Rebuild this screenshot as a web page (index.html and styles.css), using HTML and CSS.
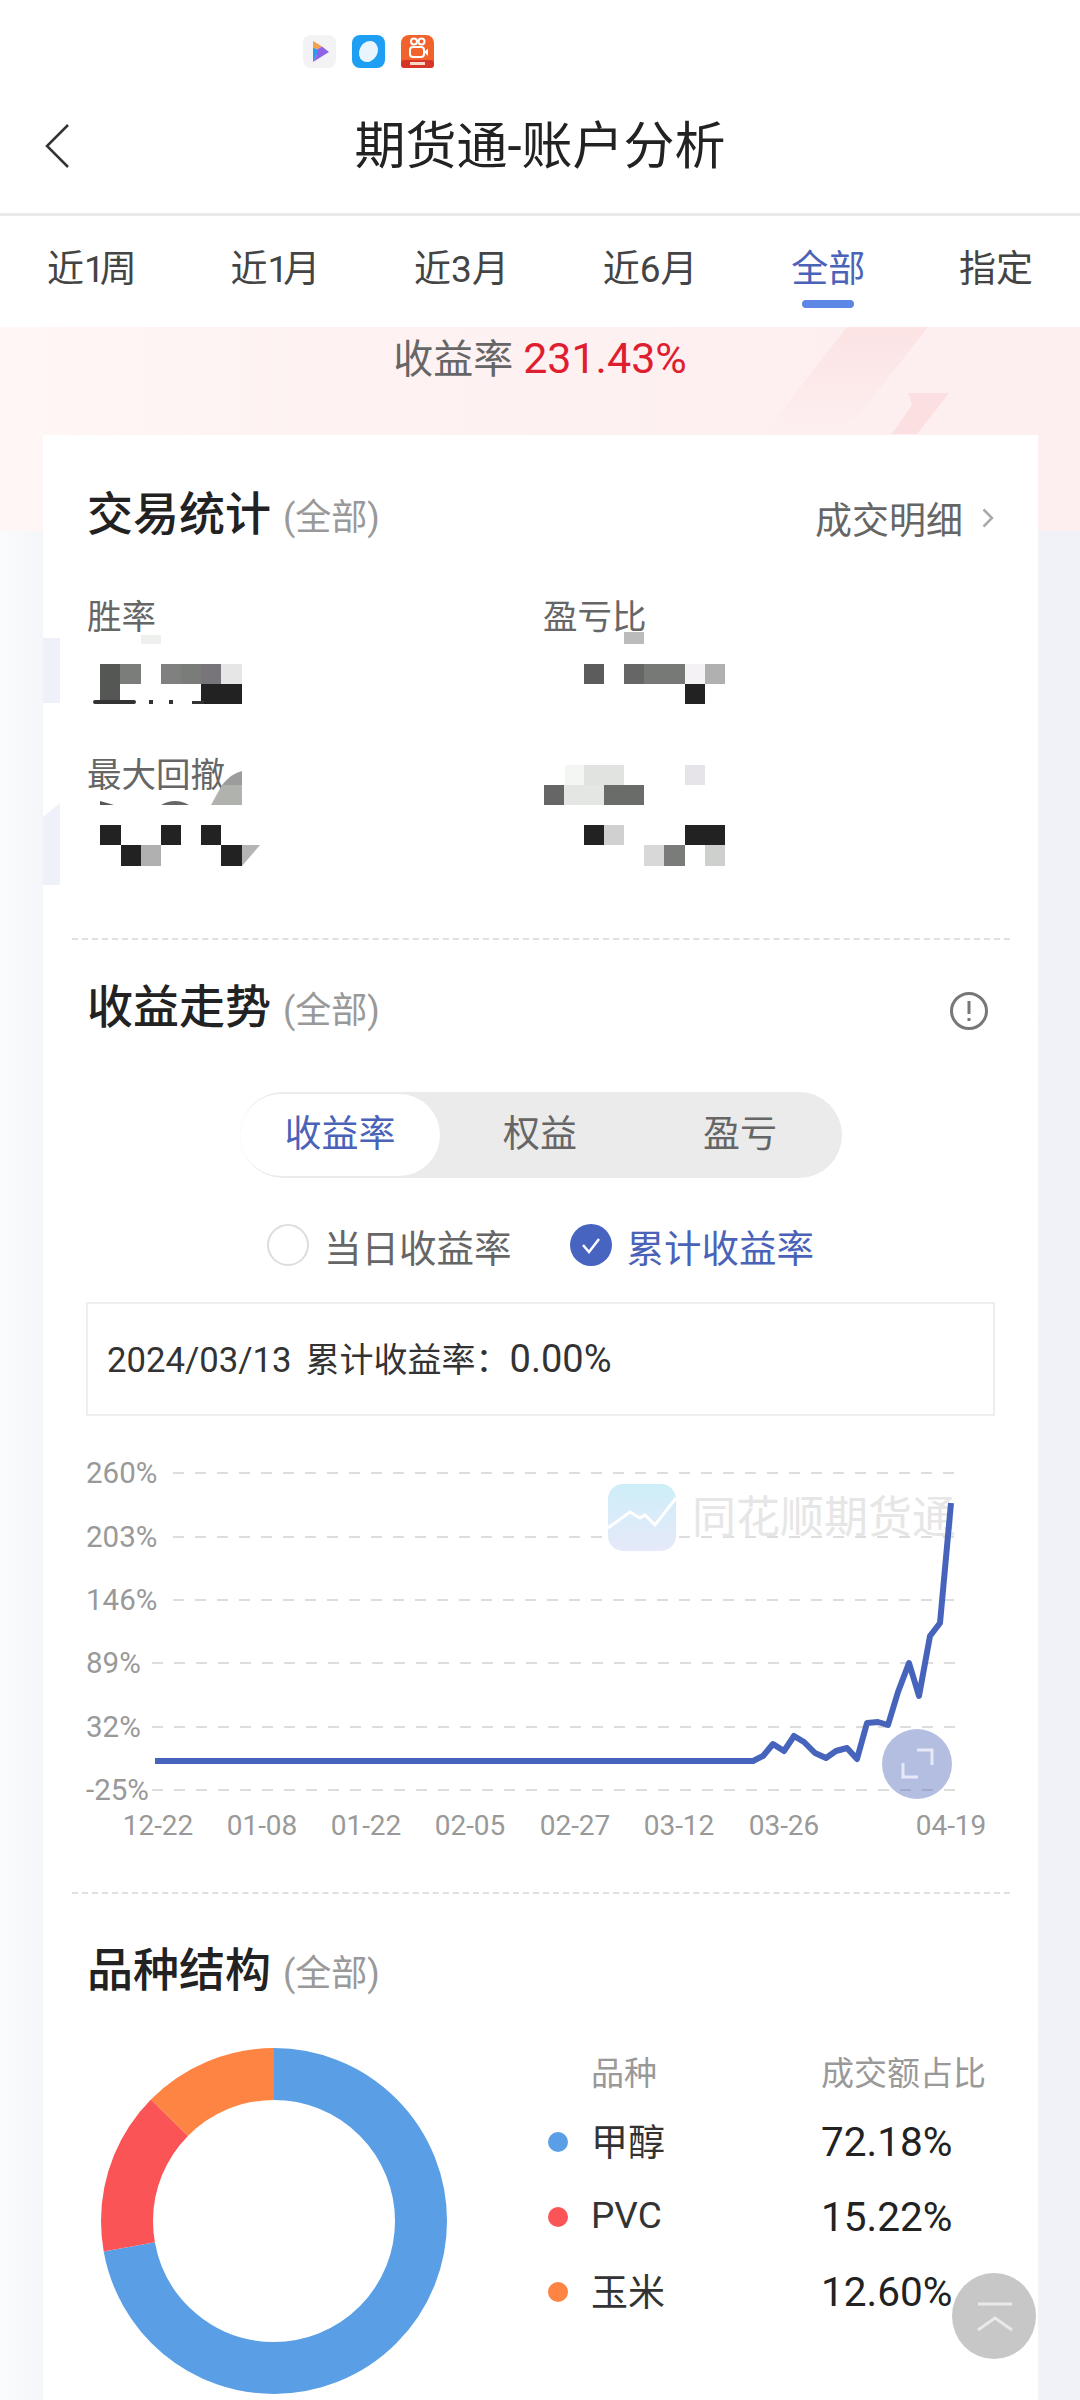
FILE: index.html
```html
<!DOCTYPE html>
<html lang="zh-CN">
<head>
<meta charset="utf-8">
<meta name="viewport" content="width=device-width,initial-scale=1.0">
<title>期货通-账户分析</title>
<link rel="stylesheet" href="styles.css">
</head>
<body>

<div class="statusbar">
    <svg class="app-icon" viewBox="0 0 33 33">
        <rect width="33" height="33" rx="8" fill="#f3f3f6"/>
        <path d="M10 6 L19 11.5 L14 14.5 L10 12.5Z" fill="#f5a14a"/>
        <path d="M10 12.5 L14 14.5 L14 20 L10 27Z" fill="#2f9bf0"/>
        <path d="M14 14.5 L19 11.5 L26 17 L10 27 L14 20Z" fill="#8f62e8"/>
    </svg>
    <svg class="app-icon" viewBox="0 0 33 33">
        <rect width="33" height="33" rx="8" fill="#1e9ff3"/>
        <ellipse cx="16.5" cy="16.5" rx="9" ry="11" transform="rotate(30 16.5 16.5)" fill="#e9f5fd"/>
    </svg>
    <svg class="app-icon" viewBox="0 0 33 33">
        <rect width="33" height="33" rx="8" fill="#f2622c"/>
        <rect y="25" width="33" height="8" rx="3" fill="#d8352a"/>
        <circle cx="13" cy="6.5" r="3" fill="none" stroke="#fff" stroke-width="2"/>
        <circle cx="20.5" cy="6.5" r="3" fill="none" stroke="#fff" stroke-width="2"/>
        <rect x="9" y="12" width="14" height="10" rx="3" fill="none" stroke="#fff" stroke-width="2"/>
        <path d="M23 17 L27 13.5 V21Z" fill="#fff"/>
        <rect x="9" y="27" width="15" height="3" fill="#f7d7c4"/>
    </svg>
</div>

<header class="navbar">
    <svg class="back" viewBox="0 0 26 46"><polyline points="24,2 3,23 24,44"/></svg>
    <h1>期货通-账户分析</h1>
</header>

<nav class="tabs">
    <span class="tab">近<b>1</b>周</span>
    <span class="tab">近<b>1</b>月</span>
    <span class="tab">近3月</span>
    <span class="tab">近6月</span>
    <span class="tab active">全部</span>
    <span class="tab">指定</span>
</nav>

<main class="content">
    <svg class="hero-bg" viewBox="0 0 1080 204">
        <defs>
            <linearGradient id="stripe" x1="0" y1="0" x2="0" y2="1">
                <stop offset="0" stop-color="#fce3e4"/>
                <stop offset="1" stop-color="#fdeff0"/>
            </linearGradient>
        </defs>
        <polygon points="847,0 928,0 844,107 764,107" fill="url(#stripe)"/>
        <polygon points="908,66 949,66 917,107 892,107 912,78" fill="#fcdfe1"/>
    </svg>

    <div class="total-rate">收益率 <em>231.43%</em></div>

    <div class="card">
        <i class="smear smear-a"></i>
        <i class="smear smear-b"></i>

        <div class="section-head">
            <h2>交易统计</h2><span class="range">(全部)</span>
            <a class="more">成交明细
                <svg viewBox="0 0 12 20"><polyline points="1.5,1.5 10,10 1.5,18.5"/></svg>
            </a>
        </div>

        <div class="stats">
            <div class="stat">
                <label>胜率</label>
                <svg viewBox="87 598 456 158">
                    <rect x="141" y="635" width="20" height="9" fill="#eef0ee"/>
                    <rect x="100" y="664" width="20" height="38" fill="#555755"/>
                    <rect x="120" y="664" width="21" height="20" fill="#7b7d7b"/>
                    <rect x="161" y="664" width="20" height="20" fill="#808080"/>
                    <rect x="181" y="664" width="20" height="20" fill="#7a7c7a"/>
                    <rect x="201" y="664" width="20" height="20" fill="#777579"/>
                    <rect x="221" y="664" width="21" height="20" fill="#e6e6e6"/>
                    <rect x="201" y="684" width="41" height="20" fill="#222"/>
                    <rect x="93" y="700" width="43" height="4" rx="2" fill="#333"/>
                    <rect x="149" y="700" width="4" height="4" fill="#333"/>
                    <rect x="169" y="700" width="4" height="4" fill="#333"/>
                    <rect x="192" y="701" width="12" height="3" fill="#333"/>
                </svg>
            </div>
            <div class="stat">
                <label>盈亏比</label>
                <svg viewBox="543 598 456 158">
                    <rect x="624" y="632" width="20" height="12" fill="#bbb"/>
                    <rect x="584" y="664" width="20" height="20" fill="#5c5c5c"/>
                    <rect x="624" y="664" width="20" height="20" fill="#666"/>
                    <rect x="644" y="664" width="41" height="20" fill="#777977"/>
                    <rect x="685" y="664" width="20" height="20" fill="#f5f2f5"/>
                    <rect x="705" y="664" width="20" height="20" fill="#b0b0b0"/>
                    <rect x="685" y="684" width="20" height="20" fill="#222"/>
                </svg>
            </div>
            <div class="stat">
                <label>最大回撤</label>
                <svg viewBox="87 756 456 158">
                    <path d="M211 805 L222 785 Q232 773 242 771 V785 H222Z" fill="#9c9c9c"/>
                    <path d="M211 805 L222 785 H242 V805Z" fill="#b0b2ae"/>
                    <path d="M100 801 L114 805 H100Z" fill="#555"/>
                    <path d="M161 805 Q175 797 189 805Z" fill="#666"/>
                    <rect x="100" y="825" width="21" height="20" fill="#222"/>
                    <rect x="161" y="825" width="20" height="20" fill="#222"/>
                    <rect x="201" y="825" width="20" height="20" fill="#222"/>
                    <rect x="121" y="845" width="20" height="21" fill="#222"/>
                    <rect x="141" y="845" width="20" height="21" fill="#b0b0b0"/>
                    <rect x="221" y="845" width="21" height="21" fill="#222"/>
                    <polygon points="242,845 260,845 242,866" fill="#b4b4b4"/>
                </svg>
            </div>
            <div class="stat">
                <label></label>
                <svg viewBox="543 756 456 158">
                    <rect x="565" y="765" width="19" height="20" fill="#f4f6f4"/>
                    <rect x="584" y="765" width="40" height="20" fill="#e0e3e0"/>
                    <rect x="685" y="765" width="20" height="20" fill="#e6e4e8"/>
                    <rect x="544" y="785" width="20" height="20" fill="#666"/>
                    <rect x="564" y="785" width="40" height="20" fill="#e4e6e4"/>
                    <rect x="604" y="785" width="40" height="20" fill="#6a6c6a"/>
                    <rect x="584" y="825" width="20" height="20" fill="#222"/>
                    <rect x="604" y="825" width="20" height="20" fill="#d0d0d0"/>
                    <rect x="685" y="825" width="40" height="20" fill="#222"/>
                    <rect x="644" y="845" width="20" height="21" fill="#d8d8d8"/>
                    <rect x="664" y="845" width="21" height="21" fill="#7a7c7a"/>
                    <rect x="705" y="845" width="20" height="21" fill="#cdd0cd"/>
                </svg>
            </div>
        </div>

        <div class="divider"></div>

        <div class="section-head trend-head">
            <h2>收益走势</h2><span class="range">(全部)</span>
            <svg class="info" viewBox="0 0 40 40">
                <circle cx="20" cy="20" r="17.5"/>
                <line x1="20" y1="10" x2="20" y2="23"/>
                <line x1="20" y1="27" x2="20" y2="30"/>
            </svg>
        </div>

        <div class="segment">
            <span class="seg active">收益率</span>
            <span class="seg">权益</span>
            <span class="seg">盈亏</span>
        </div>

        <div class="radios">
            <span class="radio"><i class="dot-off"></i>当日收益率</span>
            <span class="radio on">
                <svg class="dot-on" viewBox="0 0 42 42">
                    <circle cx="21" cy="21" r="21"/>
                    <polyline points="13,21 19,28 29,15"/>
                </svg>累计收益率</span>
        </div>

        <div class="tipbox"><span class="tip-date">2024/03/13</span><span class="tip-name">累计收益率：</span><span class="tip-val">0.00%</span></div>

        <svg class="chart" viewBox="43 1416 995 476">
            <g class="grid">
                <line x1="173" y1="1473" x2="957" y2="1473"/>
                <line x1="173" y1="1537" x2="957" y2="1537"/>
                <line x1="173" y1="1600" x2="957" y2="1600"/>
                <line x1="152" y1="1663" x2="957" y2="1663"/>
                <line x1="152" y1="1727" x2="957" y2="1727"/>
                <line x1="152" y1="1790" x2="957" y2="1790"/>
            </g>
            <g class="ylab">
                <text x="86" y="1483">260%</text>
                <text x="86" y="1547">203%</text>
                <text x="86" y="1610">146%</text>
                <text x="86" y="1673">89%</text>
                <text x="86" y="1737">32%</text>
                <text x="86" y="1800">-25%</text>
            </g>
            <g class="xlab">
                <text x="158" y="1835">12-22</text>
                <text x="262" y="1835">01-08</text>
                <text x="366" y="1835">01-22</text>
                <text x="470" y="1835">02-05</text>
                <text x="575" y="1835">02-27</text>
                <text x="679" y="1835">03-12</text>
                <text x="784" y="1835">03-26</text>
                <text x="951" y="1835">04-19</text>
            </g>
            <defs>
                <linearGradient id="wm" x1="0" y1="0" x2="0" y2="1">
                    <stop offset="0" stop-color="#cdeef8"/>
                    <stop offset="1" stop-color="#e6e9f9"/>
                </linearGradient>
            </defs>
            <rect x="608" y="1484" width="68" height="67" rx="15" fill="url(#wm)"/>
            <polyline class="wm-line" points="608,1528 630,1512 640,1518 645,1515 655,1525 676,1498"/>
            <text class="wm-text" x="692" y="1533">同花顺期货通</text>
            <polyline class="curve" points="155,1761 753,1761 763,1756 773,1744 784,1751 794,1736 804,1742 815,1753 826,1758 836,1751 847,1748 857,1759 867,1723 878,1722 888,1725 898,1692 909,1663 919,1696 930,1636 940,1623 951,1503"/>
            <circle class="zoom-bg" cx="917" cy="1764" r="35"/>
            <polyline class="zoom-ic" points="917,1750 932,1750 932,1765"/>
            <polyline class="zoom-ic" points="903,1763 903,1777 918,1777"/>
        </svg>

        <div class="divider"></div>

        <div class="section-head kind-head">
            <h2>品种结构</h2><span class="range">(全部)</span>
        </div>

        <div class="kinds">
            <svg class="donut" viewBox="0 0 346 346">
                <g transform="rotate(-90 173 173)">
                    <circle cx="173" cy="173" r="147" pathLength="100" stroke="#5a9fe6" stroke-dasharray="72.18 100"/>
                    <circle cx="173" cy="173" r="147" pathLength="100" stroke="#fb5456" stroke-dasharray="15.22 100" stroke-dashoffset="-72.18"/>
                    <circle cx="173" cy="173" r="147" pathLength="100" stroke="#fd8442" stroke-dasharray="12.6 100" stroke-dashoffset="-87.4"/>
                </g>
            </svg>
            <div class="legend">
                <span></span><span class="lg-head">品种</span><span class="lg-head">成交额占比</span>
                <i class="lg-dot blue"></i><span class="lg-name">甲醇</span><span class="lg-val">72.18%</span>
                <i class="lg-dot red"></i><span class="lg-name">PVC</span><span class="lg-val">15.22%</span>
                <i class="lg-dot orange"></i><span class="lg-name">玉米</span><span class="lg-val">12.60%</span>
            </div>
        </div>
    </div>
</main>

<div class="totop">
    <svg viewBox="0 0 84 86">
        <line x1="26" y1="31" x2="60" y2="31"/>
        <polyline points="26,57 43,45 60,57"/>
    </svg>
</div>

</body>
</html>
```

FILE: styles.css
```css
html, body {
    margin: 0;
    padding: 0;
}

body {
    position: relative;
    width: 1080px;
    height: 2400px;
    overflow: hidden;
    background: #fff;
    font-family: Roboto, "Noto Sans CJK SC", sans-serif;
    color: #333;
}

/* top */
.statusbar {
    display: flex;
    gap: 16px;
    height: 80px;
    padding: 35px 0 0 303px;
    box-sizing: border-box;
}

.app-icon {
    width: 33px;
    height: 33px;
}

.navbar {
    position: relative;
    display: flex;
    align-items: center;
    justify-content: center;
    height: 133px;
    border-bottom: 3px solid #e9e9e9;
}

.navbar h1 {
    margin: 0;
    font-size: 51px;
    font-weight: 400;
    line-height: 60px;
    color: #222;
}

.back {
    position: absolute;
    left: 44px;
    top: 43px;
    width: 26px;
    height: 46px;
    fill: none;
    stroke: #333;
    stroke-width: 2.5;
}

.tabs {
    display: flex;
    justify-content: space-between;
    align-items: flex-start;
    height: 111px;
    padding: 32px 47px 0;
    box-sizing: border-box;
    font-size: 37px;
    line-height: 44px;
    color: #444;
}

.tab b {
    font-weight: 400;
    letter-spacing: -5px;
}

.tab.active {
    color: #4a63b8;
}

.tab.active::after {
    content: "";
    display: block;
    width: 52px;
    height: 8px;
    margin: 8px auto 0;
    border-radius: 4px;
    background: #5b86e5;
}

/* page body */
.content {
    position: relative;
    height: 2073px;
    background: linear-gradient(90deg, #fafbfc 0, #f5f6fa 43px, #f0f2f8 100%);
}

.hero-bg {
    position: absolute;
    left: 0;
    top: 0;
    width: 1080px;
    height: 204px;
    background: linear-gradient(90deg, #fff6f6, #fef2f2 35%, #fdeeef);
}

.total-rate {
    position: relative;
    height: 108px;
    padding-top: 9px;
    box-sizing: border-box;
    text-align: center;
    font-size: 40px;
    line-height: 44px;
    color: #666;
}

.total-rate em {
    font-style: normal;
    font-size: 43px;
    color: #de1f30;
}

.card {
    position: relative;
    min-height: 1965px;
    margin: 0 42px 0 43px;
    padding-top: 57px;
    box-sizing: border-box;
    background: #fff;
}

.smear {
    position: absolute;
    left: 0;
    width: 17px;
    background: #eef1f9;
}

.smear-a {
    top: 203px;
    height: 65px;
}

.smear-b {
    top: 368px;
    height: 82px;
    clip-path: polygon(0 14px, 100% 0, 100% 100%, 0 100%);
}

.section-head {
    display: flex;
    align-items: center;
    height: 44px;
    padding: 0 44px;
}

.section-head h2 {
    margin: 0;
    font-size: 46px;
    font-weight: 500;
    line-height: 42px;
    color: #222;
}

.range {
    margin-left: 12px;
    font-size: 36px;
    color: #999;
}

.more {
    display: flex;
    align-items: center;
    gap: 19px;
    margin-left: auto;
    margin-top: 8px;
    font-size: 37px;
    color: #666;
}

.more svg {
    width: 12px;
    height: 20px;
    fill: none;
    stroke: #aaa;
    stroke-width: 2.5;
}

/* stats */
.stats {
    display: grid;
    grid-template-columns: 456px 1fr;
    grid-auto-rows: 158px;
    margin: 62px 0 24px 44px;
}

.stat label {
    display: block;
    height: 34px;
    font-size: 34.5px;
    line-height: 38px;
    color: #666;
}

.stat svg {
    display: block;
    width: 456px;
    height: 158px;
    margin-top: -34px;
}

.divider {
    height: 0;
    margin: 0 28px 0 29px;
    border-top: 2px dashed #e0e0e0;
}

/* trend */
.trend-head {
    margin-top: 45px;
}

.info {
    width: 40px;
    height: 40px;
    margin-left: auto;
    margin-right: 5px;
    margin-top: 8px;
    fill: none;
    stroke: #777;
    stroke-width: 3;
}

.segment {
    display: flex;
    width: 602px;
    height: 86px;
    margin: 63px 0 0 197px;
    padding: 2px 0;
    box-sizing: border-box;
    border-radius: 43px;
    background: #ebebeb;
}

.seg {
    width: 200px;
    text-align: center;
    font-size: 37px;
    line-height: 82px;
    color: #666;
}

.seg.active {
    border-radius: 41px;
    background: #fff;
    color: #4a63b8;
}

.radios {
    display: flex;
    align-items: center;
    gap: 58px;
    height: 42px;
    margin: 46px 0 0 224px;
    font-size: 37.5px;
    color: #666;
}

.radio {
    display: flex;
    align-items: center;
    gap: 15px;
}

.radio.on {
    color: #4a63b8;
}

.dot-off {
    width: 42px;
    height: 42px;
    box-sizing: border-box;
    border: 2px solid #ddd;
    border-radius: 50%;
}

.dot-on {
    width: 42px;
    height: 42px;
}

.dot-on circle {
    fill: #4664c0;
}

.dot-on polyline {
    fill: none;
    stroke: #fff;
    stroke-width: 2.5;
}

.tipbox {
    height: 114px;
    margin: 36px 43px 0;
    padding-left: 19px;
    box-sizing: border-box;
    border: 2px solid #eee;
    font-size: 34.7px;
    line-height: 110px;
    color: #333;
}

.tip-name {
    margin-left: 14px;
    font-size: 34px;
}

.tip-val {
    font-size: 38px;
}

/* chart */
.chart {
    display: block;
    width: 995px;
    height: 476px;
}

.grid line {
    stroke: #ddd;
    stroke-width: 2;
    stroke-dasharray: 11 11;
}

.ylab text {
    font-size: 29.5px;
    fill: #999;
}

.xlab text {
    font-size: 28px;
    fill: #999;
    text-anchor: middle;
}

.wm-line {
    fill: none;
    stroke: #fff;
    stroke-width: 3;
}

.wm-text {
    font-size: 44px;
    fill: #e6e6e6;
}

.curve {
    fill: none;
    stroke: #4664bb;
    stroke-width: 6;
    stroke-linejoin: round;
}

.zoom-bg {
    fill: #4a63b8;
    opacity: .42;
}

.zoom-ic {
    fill: none;
    stroke: #e6eaf7;
    stroke-width: 3;
}

/* kinds */
.kind-head {
    margin-top: 54px;
}

.kinds {
    display: flex;
    margin: 56px 0 0 58px;
}

.donut {
    width: 346px;
    height: 346px;
    flex: none;
}

.donut circle {
    fill: none;
    stroke-width: 52;
}

.legend {
    display: grid;
    grid-template-columns: 43px 230px auto;
    grid-template-rows: 56px repeat(3, 75px);
    align-items: center;
    align-self: flex-start;
    margin-left: 101px;
}

.lg-head {
    margin-bottom: 10px;
    font-size: 33px;
    color: #999;
}

.lg-dot {
    width: 20px;
    height: 20px;
    border-radius: 50%;
}

.lg-dot.blue {
    background: #5a9fe6;
}

.lg-dot.red {
    background: #fb5456;
}

.lg-dot.orange {
    background: #fd8442;
}

.lg-name {
    margin-bottom: 3px;
    font-size: 37px;
    color: #333;
}

.lg-val {
    font-size: 40.5px;
    color: #222;
}

.totop {
    position: absolute;
    left: 952px;
    top: 2273px;
    width: 84px;
    height: 86px;
    border-radius: 50%;
    background: rgba(178, 178, 178, .72);
}

.totop svg {
    display: block;
    width: 84px;
    height: 86px;
    fill: none;
    stroke: #e9e9e9;
    stroke-width: 3;
}
```
